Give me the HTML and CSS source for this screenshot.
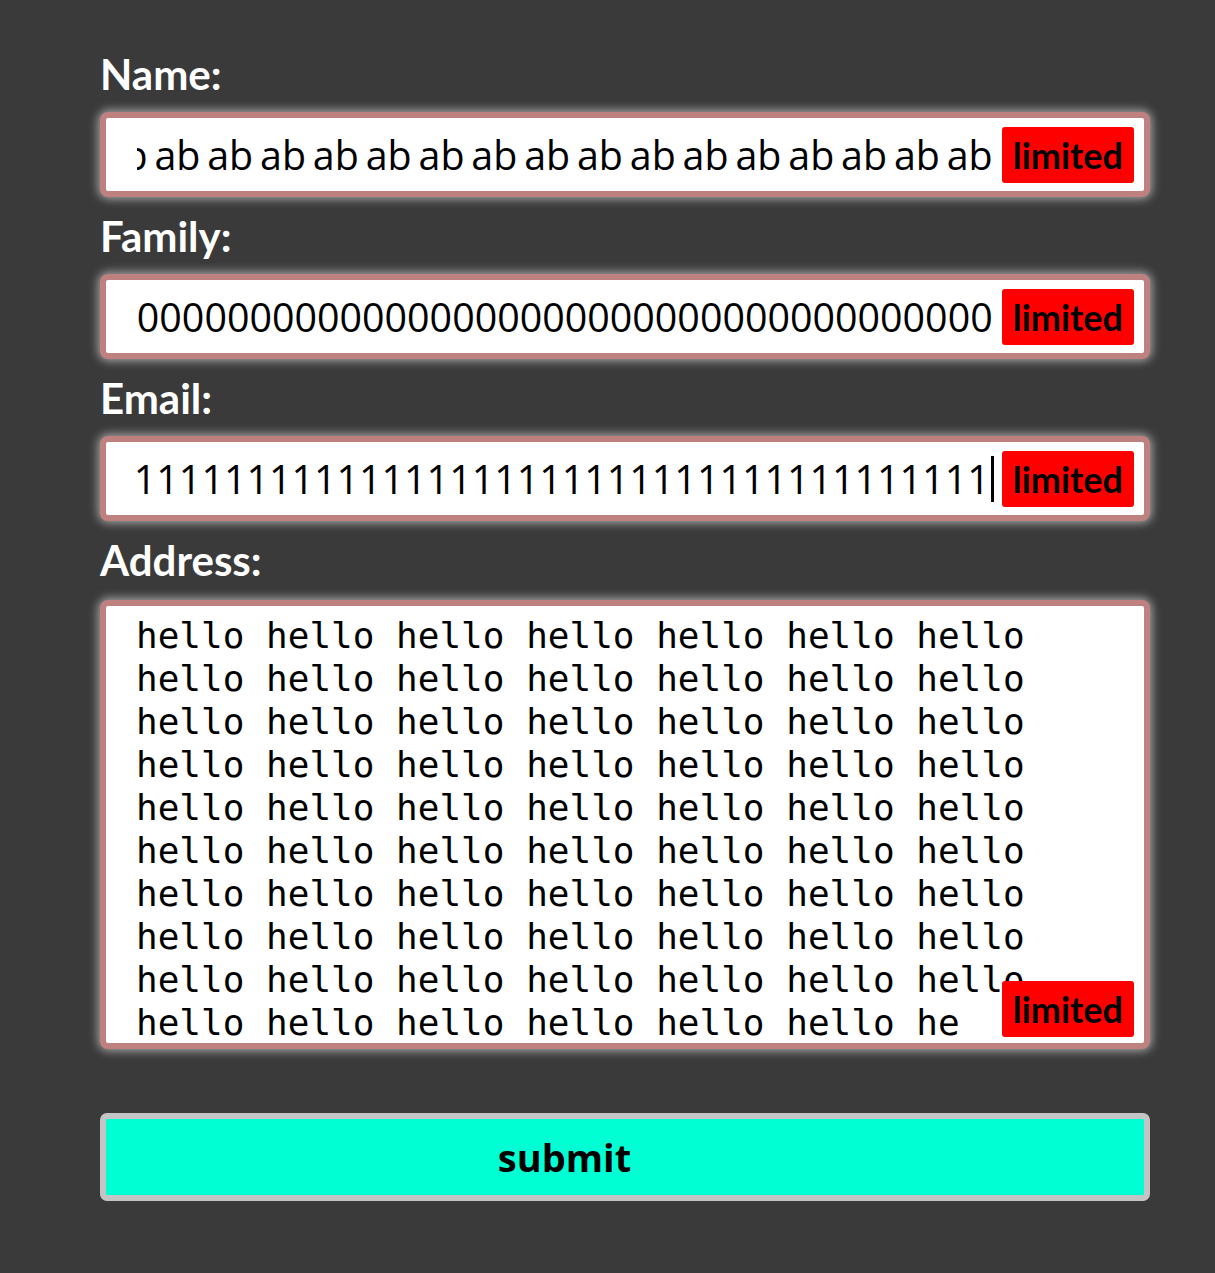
FILE: index.html
```html
<!DOCTYPE html>
<html lang="en">
<head>
<meta charset="utf-8">
<title>Form</title>
<link rel="stylesheet" href="styles.css">
</head>
<body>
<main class="form">
  <div class="field">
    <label class="label">Name:</label>
    <div class="input">
      <div class="value"><span class="text text-words">ab ab ab ab ab ab ab ab ab ab ab ab ab ab ab ab ab ab ab ab ab ab</span></div>
      <span class="badge">limited</span>
    </div>
  </div>
  <div class="field">
    <label class="label">Family:</label>
    <div class="input">
      <div class="value"><span class="text">00000000000000000000000000000000000000</span></div>
      <span class="badge">limited</span>
    </div>
  </div>
  <div class="field">
    <label class="label">Email:</label>
    <div class="input">
      <div class="value value-caret"><span class="text">11111111111111111111111111111111111111</span><span class="caret"></span></div>
      <span class="badge">limited</span>
    </div>
  </div>
  <div class="field">
    <label class="label">Address:</label>
    <div class="textarea">
      <div class="textarea-text">hello hello hello hello hello hello hello hello hello hello hello hello hello hello hello hello hello hello hello hello hello hello hello hello hello hello hello hello hello hello hello hello hello hello hello hello hello hello hello hello hello hello hello hello hello hello hello hello hello hello hello hello hello hello hello hello hello hello hello hello hello hello hello hello hello hello hello hello hello he</div>
      <span class="badge badge-corner">limited</span>
    </div>
  </div>
  <button class="submit" type="button">submit</button>
</main>
</body>
</html>
```

FILE: styles.css
```css
* { box-sizing: border-box; }

html, body {
  margin: 0;
  padding: 0;
}

body {
  background: #3a3a3a;
  min-height: 1273px;
}

.form {
  width: 1050px;
  margin-left: 100px;
  padding-top: 50px;
  display: flex;
  flex-direction: column;
}

.field {
  display: flex;
  flex-direction: column;
}

.label {
  font-family: Lato, "Liberation Sans", sans-serif;
  font-weight: 700;
  font-size: 42px;
  line-height: 48px;
  color: #ffffff;
  margin-bottom: 14px;
}

.input {
  height: 85px;
  border: 6px solid #bf8080;
  border-radius: 8px;
  background: #ffffff;
  box-shadow: 0 0 10px 2px rgba(255, 255, 255, 0.55);
  display: flex;
  align-items: center;
  margin-bottom: 15px;
}

.value {
  flex: 1;
  min-width: 0;
  margin-left: 31px;
  margin-right: 9px;
  overflow: hidden;
  display: flex;
  justify-content: flex-end;
  align-items: center;
  white-space: nowrap;
}

.value-caret {
  margin-left: 29px;
  margin-right: 8px;
}

.text {
  flex: none;
  font-family: "Open Sans", "Noto Sans", sans-serif;
  font-size: 39.4px;
  line-height: 50px;
  color: #000000;
}

.text-words {
  word-spacing: -3.4px;
}

.caret {
  flex: none;
  width: 3px;
  height: 46px;
  background: #000000;
  margin-left: 1px;
}

.badge {
  flex: none;
  background: #ff0000;
  color: #000000;
  border-radius: 3px;
  font-family: Lato, "Liberation Sans", sans-serif;
  font-weight: 700;
  font-size: 36px;
  line-height: 56px;
  height: 56px;
  padding: 0 11px;
  margin-right: 10px;
}

.textarea {
  position: relative;
  height: 449px;
  border: 6px solid #bf8080;
  border-radius: 8px;
  background: #ffffff;
  box-shadow: 0 0 10px 2px rgba(255, 255, 255, 0.55);
  overflow: hidden;
  padding: 8px 60px 0 30px;
  margin-top: 2px;
}

.textarea-text {
  font-family: "DejaVu Sans Mono", "Liberation Mono", monospace;
  font-size: 36px;
  line-height: 43px;
  color: #000000;
  word-wrap: break-word;
}

.badge-corner {
  position: absolute;
  right: 0;
  bottom: 6px;
}

.submit {
  margin-top: 64px;
  height: 88px;
  width: 1050px;
  border: 6px solid #c4c4c4;
  border-radius: 7px;
  background: #00ffd2;
  color: #000000;
  font-family: "Open Sans", "Noto Sans", sans-serif;
  font-weight: 700;
  font-size: 38px;
  padding: 0 121px 0 0;
  text-align: center;
  cursor: pointer;
}
```
